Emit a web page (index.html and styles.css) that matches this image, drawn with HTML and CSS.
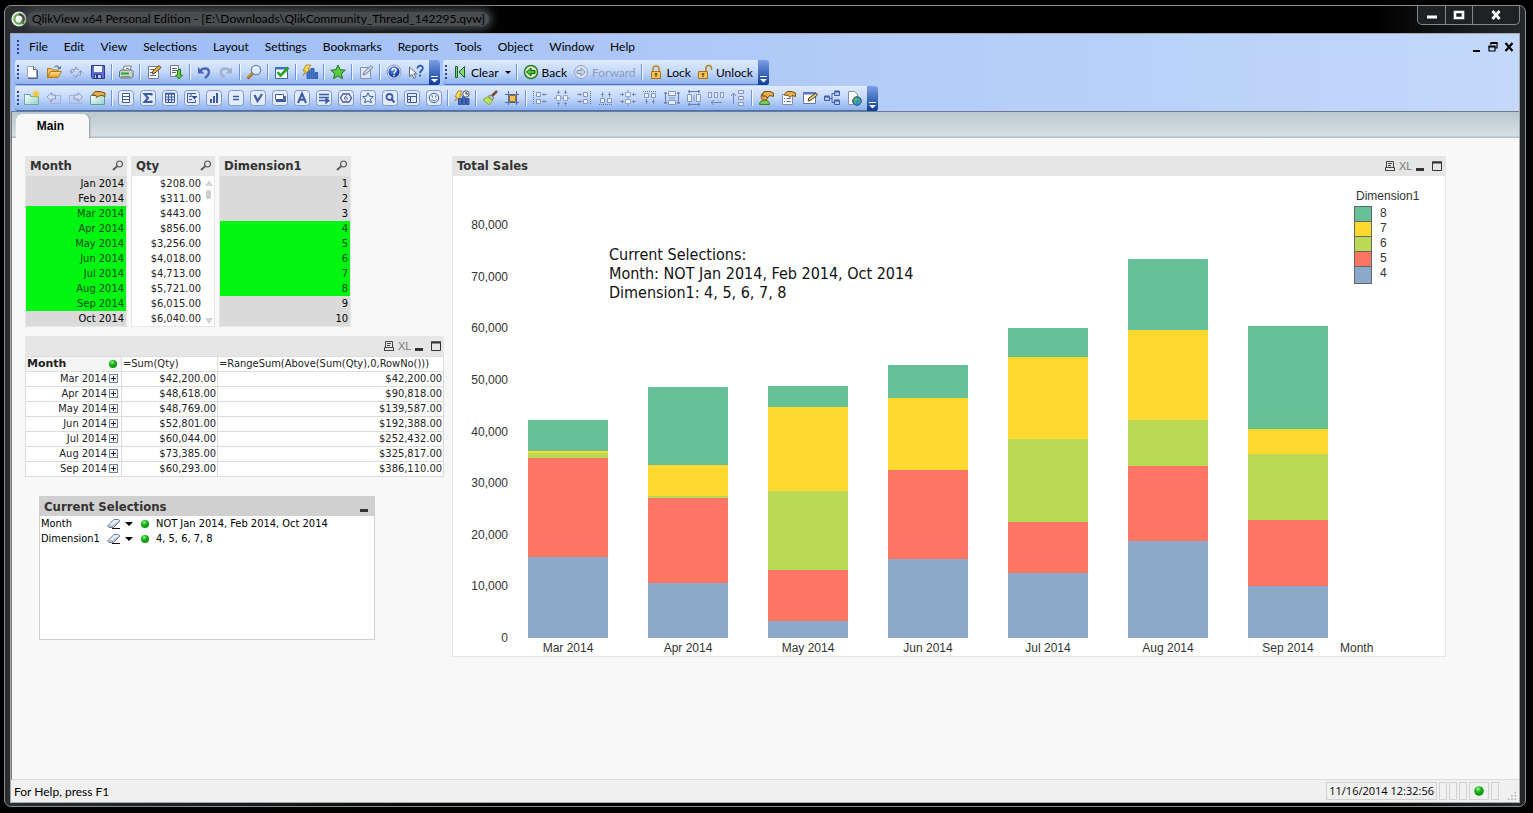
FILE: index.html
```html
<!DOCTYPE html>
<html lang="en">
<head>
<meta charset="utf-8">
<title>QlikView x64 Personal Edition</title>
<link rel="stylesheet" href="styles.css">
</head>
<body>
<svg class="sprite" aria-hidden="true">
  <defs>
    <linearGradient id="gFolder" x1="0" y1="0" x2="0" y2="1"><stop offset="0" stop-color="#ffe79a"/><stop offset="1" stop-color="#e8961e"/></linearGradient>
    <linearGradient id="gTeal" x1="0" y1="0" x2="1" y2="1"><stop offset="0" stop-color="#fff"/><stop offset="1" stop-color="#8fd3c8"/></linearGradient>
    <radialGradient id="gBlue" cx=".4" cy=".3"><stop offset="0" stop-color="#6f9cf0"/><stop offset="1" stop-color="#1a44b0"/></radialGradient>
    <radialGradient id="gGreen" cx=".4" cy=".3"><stop offset="0" stop-color="#b6f7a6"/><stop offset=".5" stop-color="#25c41f"/><stop offset="1" stop-color="#0f9a16"/></radialGradient>
  </defs>
  <symbol id="new" viewBox="0 0 16 16"><path d="M3.500 2.500h6l3 3v8h-9z" fill="#fff" stroke="#9aa5bb"/><path d="M9.500 2.500v3h3M4 14.500h9.500V6" fill="none" stroke="#55617d"/></symbol>
  <symbol id="open" viewBox="0 0 16 16"><path d="M1.500 13.500v-9h4l1 1.500h6v2" fill="#f6c65c" stroke="#b67a1c"/><path d="M1.500 13.500l3-6h11l-3.500 6z" fill="url(#gFolder)" stroke="#b67a1c"/><path d="M8 3.500c2-2.500 5-1.500 5.500 1M11.500 3.500l2.300 1.500 1-2.500" fill="none" stroke="#39588f"/></symbol>
  <symbol id="reload" viewBox="0 0 16 16"><path d="M3.500 9V5.500h4V3L11 6M1.500 6.500l2 3 2.500-3M12.500 7v4h-4v2.500L5 11M10.500 9l2-2.500L15 9" fill="#c8d2ea" stroke="#8d9cc0"/></symbol>
  <symbol id="save" viewBox="0 0 16 16"><path d="M1.500 1.500h13v13h-12l-1-1z" fill="#5d6fd0" stroke="#2b3a91"/><path d="M4 2h8v6H4z" fill="#f2f4fb"/><path d="M4.500 10.500h7v4h-7z" fill="#c5ccdf" stroke="#2b3a91"/><path d="M6 11h2v3H6z" fill="#2b3a91"/></symbol>
  <symbol id="print" viewBox="0 0 16 16"><path d="M4.500 7l2-5h7l-2 5z" fill="#fff" stroke="#6e7f8f"/><path d="M1.500 7.500l2-1.500h10l1.500 1.500v5l-2 1.500h-10l-1.500-1z" fill="#c9d5cd" stroke="#5a6d66"/><path d="M3 9.500h8" stroke="#2da52f" stroke-width="2"/><path d="M3 12.500h9M8 4.500h3" stroke="#7d8f88"/></symbol>
  <symbol id="edit" viewBox="0 0 16 16"><path d="M2.500 2.500h10v12h-10z" fill="#fff" stroke="#707b92"/><path d="M4 5.500h4M4 8.500h3M4 11.500h6" stroke="#5a6580"/><path d="M6 10l1-3 6-5.500 2 2-6 5.500z" fill="#f0b437" stroke="#5a3f12"/></symbol>
  <symbol id="script" viewBox="0 0 16 16"><path d="M2.500 1.500h8v11h-8z" fill="#fff" stroke="#707b92"/><path d="M4 4.500h5M4 6.500h5M4 8.500h4" stroke="#5a6580"/><path d="M9.500 6v5h-2l3.500 4 3.500-4h-2V5z" fill="#5dcb45" stroke="#28781d"/></symbol>
  <symbol id="undo" viewBox="0 0 16 16"><path d="M4 7c3-4 9-3 9 1 0 3-2 4-4 6" fill="none" stroke="#4a66b5" stroke-width="2.500"/><path d="M2 3v6.500h6.500z" fill="#4a66b5"/></symbol>
  <symbol id="redo" viewBox="0 0 16 16"><path d="M12 7c-3-4-9-3-9 1 0 3 1 4 4 5" fill="none" stroke="#a3afca" stroke-width="2.500"/><path d="M14 3v6.500H7.500z" fill="#a3afca"/></symbol>
  <symbol id="find" viewBox="0 0 16 16"><path d="M1.500 14.500l5-5" stroke="#a36a16" stroke-width="3"/><path d="M2 13.500l4-4" stroke="#f0b848" stroke-width="1"/><circle cx="10" cy="6" r="4.700" fill="#d8ecfb" stroke="#7386a8" stroke-width="1.300"/><path d="M7.500 5c1-2 2.500-2 4-1.500" stroke="#fff" fill="none"/></symbol>
  <symbol id="check" viewBox="0 0 16 16"><path d="M1.500 3.500h12v11h-12z" fill="#fff" stroke="#3467b3"/><path d="M1 3h13v2.500H1z" fill="#3d74c9"/><path d="M3.500 8l3 3.500 8-8" fill="none" stroke="#2aa321" stroke-width="2.600"/></symbol>
  <symbol id="chart" viewBox="0 0 16 16"><path d="M5 6.500h3v8H5zM9 4.500h3v10H9zM13 8.500h2.500v6H13z" fill="#3f78d6" stroke="#214a9c" stroke-width=".8"/><path d="M4 1h5L6 5h2.500L1 11.500 3.500 7H1z" fill="#ffd94d" stroke="#9d7418" stroke-width=".7"/></symbol>
  <symbol id="star" viewBox="0 0 16 16"><path d="M8 1l2.100 4.700 5.100.5-3.900 3.400 1.200 5L8 12l-4.500 2.600 1.200-5L.8 6.200l5.100-.5z" fill="#58cf43" stroke="#23701c"/></symbol>
  <symbol id="note" viewBox="0 0 16 16"><path d="M2.500 3.500h10v11h-10z" fill="#dfe7f6" stroke="#8592b3"/><path d="M5 11l1-3 7-6.500 2 2-7 6.500z" fill="#c9d3e8" stroke="#76849f"/></symbol>
  <symbol id="help" viewBox="0 0 16 16"><circle cx="8" cy="8" r="7" fill="#fff" stroke="#8394bd"/><circle cx="8" cy="8" r="5.700" fill="url(#gBlue)"/><path d="M6 6.500c0-3 4.200-2.500 4 0C10 8 8 8 8 9.700M8 10.700v1.600" stroke="#fff" stroke-width="1.500" fill="none"/></symbol>
  <symbol id="whats" viewBox="0 0 16 16"><path d="M1.500 3v9.500l2.500-2 2 4 1.800-1-2-3.700h3z" fill="#fff" stroke="#5b6680"/><path d="M9.500 4.500c0-4 5.500-3.500 5.300 0C14.700 6.500 12 6.500 12 9M12 10.500v2" stroke="#2b56b5" stroke-width="1.800" fill="none"/></symbol>
  <symbol id="clear" viewBox="0 0 16 16"><path d="M3.500 2.500h2v11h-2zM12.500 2.500v11L7 8z" fill="#7fdc6b" stroke="#1c5e2a"/></symbol>
  <symbol id="back" viewBox="0 0 16 16"><circle cx="8" cy="8" r="6.500" fill="#d9f5cf" stroke="#2e7d27" stroke-width="1.500"/><path d="M3.500 8L8 4v2.500h4v3H8V12z" fill="#47c53b" stroke="#17520f"/></symbol>
  <symbol id="forward" viewBox="0 0 16 16"><circle cx="8" cy="8" r="6.500" fill="#dbe4f6" stroke="#93a1c0"/><path d="M12.500 8L8 4v2.500H4v3h4V12z" fill="#c7d2e8" stroke="#8493b4"/></symbol>
  <symbol id="lock" viewBox="0 0 16 16"><path d="M5 8V5c0-4 6-4 6 0v3" fill="none" stroke="#b5862c" stroke-width="1.500"/><path d="M3.500 7.500h9v7h-9z" fill="#f8c55a" stroke="#b0701b"/><path d="M8 9v4M6.500 10h3" stroke="#6b430b" stroke-width="1.200"/></symbol>
  <symbol id="unlock" viewBox="0 0 16 16"><path d="M9 8V4.500c0-4 5.500-4 5.500 0V6" fill="none" stroke="#b5862c" stroke-width="1.500"/><path d="M1.500 7.500h9v7h-9z" fill="#f8c55a" stroke="#b0701b"/><path d="M6 9v4M4.500 10h3" stroke="#6b430b" stroke-width="1.200"/></symbol>
  <symbol id="addsheet" viewBox="0 0 16 16"><path d="M.5 4.500h6v2h8v8H.5z" fill="url(#gTeal)" stroke="#6ba7a0"/><path d="M12 0v8M8 4h8M9.300 1.300l5.400 5.400M14.700 1.300L9.300 6.700" stroke="#f3c52e" stroke-width="1.200"/></symbol>
  <symbol id="sheetback" viewBox="0 0 16 16"><path d="M8 5.500h6.500v8H4.500V11" fill="none" stroke="#a5b2d0"/><path d="M1 7l4.500-4.500V5h4v4h-4v2.500z" fill="#d3def4" stroke="#8d9bbd"/></symbol>
  <symbol id="sheetfwd" viewBox="0 0 16 16"><path d="M5 5.500H1.500v8h12V11" fill="none" stroke="#a5b2d0"/><path d="M14.500 7L10 2.500V5H6v4h4v2.500z" fill="#d3def4" stroke="#8d9bbd"/></symbol>
  <symbol id="props" viewBox="0 0 16 16"><path d="M.5 5.500h14v9H.5z" fill="url(#gTeal)" stroke="#5f9d95"/><path d="M2 5l3-3.500h5L15 3v3.500l-3-1-3 .5-2.500 1.500L6 5.500z" fill="#e1b04d" stroke="#77500f"/></symbol>
  <symbol id="box" viewBox="0 0 16 16"><rect x=".5" y=".5" width="15" height="15" rx="3" fill="#e3ecfc" stroke="#8396c4"/></symbol>
  <symbol id="list" viewBox="0 0 16 16"><use href="#box"/><path d="M4.500 3.500h7v9h-7zM5 6.500h6M5 9.500h6" fill="#fff" stroke="#3d5aa5"/></symbol>
  <symbol id="sum" viewBox="0 0 16 16"><use href="#box"/><path d="M11.500 5.500V4h-7L8 8l-3.500 4h7v-1.500" fill="none" stroke="#3d5aa5" stroke-width="2"/></symbol>
  <symbol id="table" viewBox="0 0 16 16"><use href="#box"/><path d="M3.500 4h9v8.500h-9zM3 7h9M3 9.700h9M6.500 4v8.500M9.500 4v8.500" fill="none" stroke="#3d5aa5"/><path d="M3 3.500h10" stroke="#3d5aa5" stroke-width="1.500"/></symbol>
  <symbol id="multi" viewBox="0 0 16 16"><use href="#box"/><path d="M12 3.500H3.500v9h8V10M5 6.500h2M5 9.500h3M7 4v3" fill="none" stroke="#3d5aa5"/><path d="M7.500 6h6l-3 3.500z" fill="#2d488e"/></symbol>
  <symbol id="bars" viewBox="0 0 16 16"><use href="#box"/><path d="M4 9h2v4H4zM7 6h2v7H7zM10 3h2v10h-2z" fill="#3d5aa5"/></symbol>
  <symbol id="input" viewBox="0 0 16 16"><use href="#box"/><path d="M5 6.500h6M5 9.500h6" stroke="#3d5aa5" stroke-width="1.700"/></symbol>
  <symbol id="vee" viewBox="0 0 16 16"><use href="#box"/><path d="M4.500 5l3 6L12 4" fill="none" stroke="#3d5aa5" stroke-width="2.200"/></symbol>
  <symbol id="button" viewBox="0 0 16 16"><use href="#box"/><path d="M3.500 4.500h8v5h-8z" fill="#fff" stroke="#3d5aa5"/><path d="M4 11h9V6" fill="none" stroke="#3d5aa5" stroke-width="1.800"/></symbol>
  <symbol id="text" viewBox="0 0 16 16"><use href="#box"/><path d="M4 13L8 3.500 12 13M5 9.700h6" fill="none" stroke="#3d5aa5" stroke-width="2"/></symbol>
  <symbol id="line" viewBox="0 0 16 16"><use href="#box"/><path d="M3 4.500h10M3 7.500h10M3 10.500h7M10 8.500l3 2-3 2.500z" fill="#3d5aa5" stroke="#3d5aa5" stroke-width="1.300"/></symbol>
  <symbol id="slider" viewBox="0 0 16 16"><use href="#box"/><path d="M5 4h6l2.500 4L11 12H5L2.500 8z" fill="#fff" stroke="#3d5aa5" stroke-width="1.300"/><path d="M9.500 6C7.500 5.300 6.500 7 6.500 8.500c0 2 3 2 3 .3 0-1.500-2.200-1.500-3-.3" fill="none" stroke="#3d5aa5"/></symbol>
  <symbol id="bookmark" viewBox="0 0 16 16"><use href="#box"/><path d="M8 2.800l1.500 3.400 3.800.4-2.800 2.500.8 3.700L8 11l-3.300 1.800.8-3.700-2.800-2.500 3.800-.4z" fill="#e3ecfc" stroke="#3d5aa5"/></symbol>
  <symbol id="searchobj" viewBox="0 0 16 16"><use href="#box"/><circle cx="7.500" cy="7" r="3" fill="none" stroke="#3d5aa5" stroke-width="1.800"/><path d="M9.500 9l3 3.500" stroke="#3d5aa5" stroke-width="2"/></symbol>
  <symbol id="container" viewBox="0 0 16 16"><use href="#box"/><path d="M3.500 3.500h9v9h-9zM6.500 6v6.500M3.500 6.500h9M3.500 9.500h3" fill="none" stroke="#3d5aa5"/></symbol>
  <symbol id="smile" viewBox="0 0 16 16"><use href="#box"/><circle cx="8" cy="8" r="4.700" fill="#eef3fd" stroke="#3d5aa5"/><path d="M6.300 5.500v2M9.700 5.500v2M5.500 9.300c1.500 2 3.500 2 5 0" fill="none" stroke="#3d5aa5"/></symbol>
  <symbol id="wizard" viewBox="0 0 16 16"><path d="M4.500 8.500h3v6h-3zM8.500 6.500h3v8h-3zM12.500 8.500h2.500v6h-2.500z" fill="#3f6cc0" stroke="#223f85" stroke-width=".8"/><path d="M4 1h4L6 5h2L1 11l2-4H1z" fill="#ffd94d" stroke="#9d7418" stroke-width=".7"/><circle cx="12" cy="4" r="3.200" fill="#f4f6fb" stroke="#4c5671"/><path d="M12 2v2h2" fill="none" stroke="#222"/></symbol>
  <symbol id="brush" viewBox="0 0 16 16"><path d="M15 1L10 6" stroke="#7c4b28" stroke-width="2.500"/><path d="M9 5l3 3-1.500 2L6 6.500z" fill="#bfc5cc" stroke="#686e77" stroke-width=".8"/><path d="M6 6.500l4.500 4L7 15l-6-5.500z" fill="#a5d941" stroke="#7ca632" stroke-width=".8"/><path d="M3 9l4 4M5 8l4 4" stroke="#e0f4a4"/></symbol>
  <symbol id="grid" viewBox="0 0 16 16"><path d="M4.500 1v14M12.500 1v14M1 4.500h14M1 12.500h14" stroke="#4c69ac"/><path d="M5.500 5.500h6v6h-6z" fill="#f3c352" stroke="#9b6b1c"/></symbol>
  <symbol id="alignl" viewBox="0 0 16 16"><path d="M1.500 1v14" stroke="#5874b5" stroke-dasharray="1 1"/><path d="M4.500 2.500h4v4h-4zM4.500 9.500h4v4h-4z" fill="#e8effb" stroke="#8795b6"/><path d="M10 4.500h5M10 11.500h5M12 3v3M12 10v3" stroke="#6b7dab" stroke-width=".8"/></symbol>
  <symbol id="alignc" viewBox="0 0 16 16"><path d="M5.500 2.500h5v4h-5zM5.500 9.500h5v4h-5z" fill="#e8effb" stroke="#9aa7c4"/><path d="M8 0v2M8 7v2M8 14v2" stroke="#8795b6"/><path d="M0 4.500h4M12 4.500h4M0 11.500h4M12 11.500h4M2.500 3v3M13.500 3v3M2.500 10v3M13.500 10v3" stroke="#6b7dab" stroke-width=".8"/></symbol>
  <symbol id="alignb" viewBox="0 0 16 16"><path d="M2.500 8.500h4v4h-4zM9.500 8.500h4v4h-4z" fill="#e8effb" stroke="#8795b6"/><path d="M1 14.500h14" stroke="#5874b5" stroke-dasharray="1 1"/><path d="M4.500 2v5M11.500 2v5M3 4.500h3M10 4.500h3" stroke="#6b7dab" stroke-width=".8"/></symbol>
  <symbol id="spread" viewBox="0 0 16 16"><path d="M1.500 2v12M14.500 2v12" stroke="#6b7dab"/><path d="M4.500 1.500h7v4h-7zM4.500 10.500h7v4h-7zM5 8h6" fill="#e8effb" stroke="#8795b6"/><path d="M0 4l1.500-2L3 4M13 4l1.500-2L16 4M0 12l1.500 2L3 12M13 12l1.500 2L16 12" fill="none" stroke="#6b7dab"/></symbol>
  <symbol id="pack" viewBox="0 0 16 16"><path d="M.5 2.500h3v5h-3zM6.500 2.500h3v5h-3zM12.500 2.500h3v5h-3z" fill="#e8effb" stroke="#8795b6"/><path d="M3 12.500h11M6 10l-3 2.500L6 15" fill="none" stroke="#7788b2"/></symbol>
  <symbol id="user" viewBox="0 0 16 16"><path d="M1.500 14.500c0-6 10-6 10 0z" fill="#7dca4d" stroke="#3d7c22"/><circle cx="6.500" cy="6.500" r="3.500" fill="#f0a850" stroke="#985a18"/><path d="M4 6l2-4.500h6L15.500 3v3.500L12 5.500 9 8 8 6z" fill="#e1b04d" stroke="#77500f"/></symbol>
  <symbol id="docprops" viewBox="0 0 16 16"><path d="M2.500 4.500h10v10h-10z" fill="#f7f9fe" stroke="#8290ad"/><path d="M4 8.500h1M4 11.500h1M6.500 8.500h4M6.500 11.500h4" stroke="#57658a"/><path d="M4 5l3-3.500h5l3.500 1.500v3.500L12 5.500l-2 2-1.500-2z" fill="#e1b04d" stroke="#77500f"/></symbol>
  <symbol id="viewer" viewBox="0 0 16 16"><path d="M1.500 2.500h12v11h-12z" fill="#fff" stroke="#5c77b7"/><path d="M1 3.500h13" stroke="#5c77b7" stroke-width="2"/><path d="M6 11l1-3 7-5 1.500 2-6.500 5z" fill="#f0c868" stroke="#4e4127"/></symbol>
  <symbol id="tables" viewBox="0 0 16 16"><path d="M6 8.500h2v-5h2M8 8v4.500h2" fill="none" stroke="#4162ae"/><path d="M.5 6.500h5v4h-5zM10.500 1.500h5v4h-5zM10.500 10.500h5v4h-5z" fill="#b6c9f2" stroke="#3d5aa5"/><path d="M.5 6.500h5M10.500 1.500h5M10.500 10.500h5" stroke="#3d5aa5" stroke-width="2"/></symbol>
  <symbol id="web" viewBox="0 0 16 16"><path d="M2.500 1.500h6l3 3v10h-9z" fill="#fff" stroke="#8591ad"/><circle cx="11" cy="11" r="4.300" fill="#3b87cf" stroke="#245184"/><path d="M8 9c3-2 4 0 2.500 1.500S10 14 8.500 12.500M13 8.500c-1 2 2 3 1 5" fill="#58c04a" stroke="#58c04a"/></symbol>
  <symbol id="mag" viewBox="0 0 12 12"><circle cx="7.500" cy="4" r="3" fill="none" stroke="#555" stroke-width="1.200"/><path d="M5.300 6.200L1 10" stroke="#555" stroke-width="1.800"/></symbol>
  <symbol id="printcap" viewBox="0 0 12 12"><path d="M2.500 8V1.500h7V8M4 3.500h4M4 5.500h3M1 10.500h10M1.500 10V7.500h9V10" fill="none" stroke="#444"/></symbol>
  <symbol id="maxcap" viewBox="0 0 12 12"><path d="M1.500 2v8.500h9V2z" fill="none" stroke="#333"/><path d="M1 2.500h10" stroke="#333" stroke-width="2"/></symbol>
  <symbol id="eraser" viewBox="0 0 16 12"><path d="M1.500 8L8 1.500h4.500L14 3 7.500 9.500H3z" fill="#e6edf8" stroke="#6c7b97"/><path d="M1.500 8h5L14 3M6.500 8l1 1.500" fill="none" stroke="#8a9ab8"/><path d="M6 10.500h8" stroke="#111"/></symbol>
  <symbol id="dot" viewBox="0 0 10 10"><circle cx="5" cy="5" r="4" fill="url(#gGreen)"/></symbol>
</svg>

<div class="window">
  <header class="titlebar">
    <svg class="logo" viewBox="0 0 16 16"><circle cx="8" cy="8" r="7.600" fill="#e9ece9"/><circle cx="8" cy="8" r="4.600" fill="#fff" stroke="#6aa84a" stroke-width="2.200"/><path d="M8 3.400A4.600 4.600 0 0 1 12 10.500" fill="none" stroke="#3c4b3a" stroke-width="2.200"/><path d="M10 10l3 3" stroke="#4d9e35" stroke-width="2.200"/></svg>
    <h1 class="title">QlikView x64 Personal Edition - [E:\Downloads\QlikCommunity_Thread_142295.qvw]</h1>
    <div class="winbtns">
      <button aria-label="Minimize"><svg viewBox="0 0 14 12"><path d="M2 6.500h10v3H2z" fill="#fff"/></svg></button>
      <button aria-label="Maximize"><svg viewBox="0 0 14 12"><path d="M3 3h8v6H3z" fill="none" stroke="#fff" stroke-width="2.600"/></svg></button>
      <button class="wide" aria-label="Close"><svg viewBox="0 0 14 12"><path d="M3.500 2l7 8M10.500 2l-7 8" stroke="#fff" stroke-width="2.800"/></svg></button>
    </div>
  </header>

  <div class="client">
    <div class="bars">
      <nav class="menu">
        <span class="grip"></span>
        <button>File</button><button>Edit</button><button>View</button><button>Selections</button><button>Layout</button><button>Settings</button><button>Bookmarks</button><button>Reports</button><button>Tools</button><button>Object</button><button>Window</button><button>Help</button>
        <span class="mdi">
          <button aria-label="Minimize document"><svg viewBox="0 0 12 12"><path d="M2 9h7v2H2z"/></svg></button>
          <button aria-label="Restore document"><svg viewBox="0 0 12 12"><path d="M4 4V2h6v5H8M2 5.500h6V10H2z" fill="none" stroke="#000" stroke-width="1.200"/><path d="M3.500 2h7M1.500 5.500h7" stroke="#000" stroke-width="2"/></svg></button>
          <button aria-label="Close document"><svg viewBox="0 0 12 12"><path d="M2.500 2l7 8M9.500 2l-7 8" stroke="#000" stroke-width="2.200"/></svg></button>
        </span>
      </nav>
      <div class="row">
        <div class="toolbar" role="toolbar" aria-label="Standard">
          <span class="grip"></span>
          <button aria-label="New"><svg><use href="#new"/></svg></button><button aria-label="Open"><svg><use href="#open"/></svg></button><button aria-label="Refresh"><svg><use href="#reload"/></svg></button><button aria-label="Save"><svg><use href="#save"/></svg></button><i class="sep"></i>
          <button aria-label="Print"><svg><use href="#print"/></svg></button><i class="sep"></i>
          <button aria-label="Edit Script"><svg><use href="#edit"/></svg></button><button aria-label="Reload"><svg><use href="#script"/></svg></button><i class="sep"></i>
          <button aria-label="Undo"><svg><use href="#undo"/></svg></button><button aria-label="Redo"><svg><use href="#redo"/></svg></button><i class="sep"></i>
          <button aria-label="Search"><svg><use href="#find"/></svg></button><i class="sep"></i>
          <button aria-label="Current Selections"><svg><use href="#check"/></svg></button><i class="sep"></i>
          <button aria-label="Quick Chart"><svg><use href="#chart"/></svg></button><i class="sep"></i>
          <button aria-label="Add Bookmark"><svg><use href="#star"/></svg></button><i class="sep"></i>
          <button aria-label="Notes"><svg><use href="#note"/></svg></button><i class="sep"></i>
          <button aria-label="Help Topics"><svg><use href="#help"/></svg></button><button aria-label="Context Help"><svg><use href="#whats"/></svg></button>
          <button class="more" aria-label="More buttons"><svg viewBox="0 0 7 7"><path d="M0 0h7v1H0z" fill="#fff"/><path d="M0 3h7L3.500 6.500z" fill="#fff"/></svg></button>
        </div>
        <div class="toolbar" role="toolbar" aria-label="Navigation">
          <span class="grip"></span>
          <button class="lbl"><svg><use href="#clear"/></svg>Clear</button><button class="drop" aria-label="Clear options"></button><i class="sep"></i>
          <button class="lbl"><svg><use href="#back"/></svg>Back</button><button class="lbl off" disabled><svg><use href="#forward"/></svg>Forward</button><i class="sep"></i>
          <button class="lbl"><svg><use href="#lock"/></svg>Lock</button><button class="lbl"><svg><use href="#unlock"/></svg>Unlock</button>
          <button class="more" aria-label="More buttons"><svg viewBox="0 0 7 7"><path d="M0 0h7v1H0z" fill="#fff"/><path d="M0 3h7L3.500 6.500z" fill="#fff"/></svg></button>
        </div>
      </div>
      <div class="row">
        <div class="toolbar" role="toolbar" aria-label="Design">
          <span class="grip"></span>
          <button aria-label="Add Sheet"><svg><use href="#addsheet"/></svg></button><button aria-label="Promote Sheet"><svg><use href="#sheetback"/></svg></button><button aria-label="Demote Sheet"><svg><use href="#sheetfwd"/></svg></button><button aria-label="Sheet Properties"><svg><use href="#props"/></svg></button><i class="sep"></i>
          <button aria-label="List Box"><svg><use href="#list"/></svg></button><button aria-label="Statistics Box"><svg><use href="#sum"/></svg></button><button aria-label="Table Box"><svg><use href="#table"/></svg></button><button aria-label="Multi Box"><svg><use href="#multi"/></svg></button><button aria-label="Chart"><svg><use href="#bars"/></svg></button><button aria-label="Input Box"><svg><use href="#input"/></svg></button><button aria-label="Selections Box"><svg><use href="#vee"/></svg></button><button aria-label="Button"><svg><use href="#button"/></svg></button><button aria-label="Text Object"><svg><use href="#text"/></svg></button><button aria-label="Line Object"><svg><use href="#line"/></svg></button><button aria-label="Slider"><svg><use href="#slider"/></svg></button><button aria-label="Bookmark Object"><svg><use href="#bookmark"/></svg></button><button aria-label="Search Object"><svg><use href="#searchobj"/></svg></button><button aria-label="Container"><svg><use href="#container"/></svg></button><button aria-label="Custom Object"><svg><use href="#smile"/></svg></button><i class="sep"></i>
          <button aria-label="Time Chart Wizard"><svg><use href="#wizard"/></svg></button><i class="sep"></i>
          <button aria-label="Format Painter"><svg><use href="#brush"/></svg></button><button aria-label="Design Grid"><svg><use href="#grid"/></svg></button><i class="sep"></i>
          <button aria-label="Left Align"><svg><use href="#alignl"/></svg></button><button aria-label="Center Horizontally"><svg class="turn"><use href="#alignc"/></svg></button><button aria-label="Right Align"><svg class="flip"><use href="#alignl"/></svg></button><button aria-label="Bottom Align"><svg><use href="#alignb"/></svg></button><button aria-label="Center Vertically"><svg><use href="#alignc"/></svg></button><button aria-label="Top Align"><svg class="over"><use href="#alignb"/></svg></button><button aria-label="Space Vertically"><svg><use href="#spread"/></svg></button><button aria-label="Space Horizontally"><svg class="turn"><use href="#spread"/></svg></button><button aria-label="Adjust Left"><svg><use href="#pack"/></svg></button><button aria-label="Adjust Top"><svg class="turn"><use href="#pack"/></svg></button><i class="sep"></i>
          <button aria-label="User Preferences"><svg><use href="#user"/></svg></button><button aria-label="Document Properties"><svg><use href="#docprops"/></svg></button><button aria-label="Variable Overview"><svg><use href="#viewer"/></svg></button><button aria-label="Table Viewer"><svg><use href="#tables"/></svg></button><button aria-label="WebView"><svg><use href="#web"/></svg></button>
          <button class="more" aria-label="More buttons"><svg viewBox="0 0 7 7"><path d="M0 0h7v1H0z" fill="#fff"/><path d="M0 3h7L3.500 6.500z" fill="#fff"/></svg></button>
        </div>
      </div>
    </div>

    <div class="tabs" role="tablist"><button class="tab" role="tab" aria-selected="true">Main</button></div>

    <main class="sheet">
      <div class="left">
        <div class="lists">
          <section class="listbox month">
            <h2 class="cap">Month<svg class="mag"><use href="#mag"/></svg></h2>
            <ul><li class="ex">Jan 2014</li><li class="ex">Feb 2014</li><li class="sel">Mar 2014</li><li class="sel">Apr 2014</li><li class="sel">May 2014</li><li class="sel">Jun 2014</li><li class="sel">Jul 2014</li><li class="sel">Aug 2014</li><li class="sel">Sep 2014</li><li class="ex">Oct 2014</li></ul>
          </section>
          <section class="listbox qty">
            <h2 class="cap">Qty<svg class="mag"><use href="#mag"/></svg></h2>
            <div class="scroll">
              <ul><li>$208.00</li><li>$311.00</li><li>$443.00</li><li>$856.00</li><li>$3,256.00</li><li>$4,018.00</li><li>$4,713.00</li><li>$5,721.00</li><li>$6,015.00</li><li>$6,040.00</li></ul>
              <div class="track"><i class="up"></i><i class="thumb"></i><i class="down"></i></div>
            </div>
          </section>
          <section class="listbox dim">
            <h2 class="cap">Dimension1<svg class="mag"><use href="#mag"/></svg></h2>
            <ul><li class="ex">1</li><li class="ex">2</li><li class="ex">3</li><li class="sel">4</li><li class="sel">5</li><li class="sel">6</li><li class="sel">7</li><li class="sel">8</li><li class="ex">9</li><li class="ex">10</li></ul>
          </section>
        </div>

        <section class="pivot">
          <div class="cap"><span class="tools"><svg><use href="#printcap"/></svg><span class="xl">XL</span><i class="min"></i><svg><use href="#maxcap"/></svg></span></div>
          <table>
            <thead><tr><th class="c1"><span class="hd">Month<svg class="dot"><use href="#dot"/></svg></span></th><th class="c2">=Sum(Qty)</th><th>=RangeSum(Above(Sum(Qty),0,RowNo()))</th></tr></thead>
            <tbody>
              <tr><td>Mar 2014<button class="plus" aria-label="Expand"></button></td><td>$42,200.00</td><td>$42,200.00</td></tr>
              <tr><td>Apr 2014<button class="plus" aria-label="Expand"></button></td><td>$48,618.00</td><td>$90,818.00</td></tr>
              <tr><td>May 2014<button class="plus" aria-label="Expand"></button></td><td>$48,769.00</td><td>$139,587.00</td></tr>
              <tr><td>Jun 2014<button class="plus" aria-label="Expand"></button></td><td>$52,801.00</td><td>$192,388.00</td></tr>
              <tr><td>Jul 2014<button class="plus" aria-label="Expand"></button></td><td>$60,044.00</td><td>$252,432.00</td></tr>
              <tr><td>Aug 2014<button class="plus" aria-label="Expand"></button></td><td>$73,385.00</td><td>$325,817.00</td></tr>
              <tr><td>Sep 2014<button class="plus" aria-label="Expand"></button></td><td>$60,293.00</td><td>$386,110.00</td></tr>
            </tbody>
          </table>
        </section>

        <section class="current">
          <h2 class="cap">Current Selections<i class="min"></i></h2>
          <div class="selrow"><span class="field">Month</span><svg class="eraser"><use href="#eraser"/></svg><i class="arrow"></i><svg class="dot"><use href="#dot"/></svg><span>NOT Jan 2014, Feb 2014, Oct 2014</span></div>
          <div class="selrow"><span class="field">Dimension1</span><svg class="eraser"><use href="#eraser"/></svg><i class="arrow"></i><svg class="dot"><use href="#dot"/></svg><span>4, 5, 6, 7, 8</span></div>
        </section>
      </div>

      <section class="chart">
        <h2 class="cap">Total Sales<span class="tools"><svg><use href="#printcap"/></svg><span class="xl">XL</span><i class="min"></i><svg><use href="#maxcap"/></svg></span></h2>
        <div class="chartbody">
          <div class="axis"><span>80,000</span><span>70,000</span><span>60,000</span><span>50,000</span><span>40,000</span><span>30,000</span><span>20,000</span><span>10,000</span><span>0</span></div>
          <div class="plot">
            <div class="stack"><i class="s8" style="--v:6005"></i><i class="s7" style="--v:387"></i><i class="s6" style="--v:969"></i><i class="s5" style="--v:19177"></i><i class="s4" style="--v:15690"></i></div>
            <div class="stack"><i class="s8" style="--v:15109"></i><i class="s7" style="--v:6102"></i><i class="s6" style="--v:387"></i><i class="s5" style="--v:16465"></i><i class="s4" style="--v:10654"></i></div>
            <div class="stack"><i class="s8" style="--v:4068"></i><i class="s7" style="--v:16271"></i><i class="s6" style="--v:15303"></i><i class="s5" style="--v:9879"></i><i class="s4" style="--v:3293"></i></div>
            <div class="stack"><i class="s8" style="--v:6392"></i><i class="s7" style="--v:13947"></i><i class="s5" style="--v:17240"></i><i class="s4" style="--v:15303"></i></div>
            <div class="stack"><i class="s8" style="--v:5617"></i><i class="s7" style="--v:15884"></i><i class="s6" style="--v:16077"></i><i class="s5" style="--v:9879"></i><i class="s4" style="--v:12591"></i></div>
            <div class="stack"><i class="s8" style="--v:13753"></i><i class="s7" style="--v:17433"></i><i class="s6" style="--v:8910"></i><i class="s5" style="--v:14528"></i><i class="s4" style="--v:18789"></i></div>
            <div class="stack"><i class="s8" style="--v:19952"></i><i class="s7" style="--v:4843"></i><i class="s6" style="--v:12785"></i><i class="s5" style="--v:12785"></i><i class="s4" style="--v:10073"></i></div>
          </div>
          <div class="legend"><h3>Dimension1</h3><ul><li class="s8">8</li><li class="s7">7</li><li class="s6">6</li><li class="s5">5</li><li class="s4">4</li></ul></div>
          <div class="months"><span>Mar 2014</span><span>Apr 2014</span><span>May 2014</span><span>Jun 2014</span><span>Jul 2014</span><span>Aug 2014</span><span>Sep 2014</span></div>
          <div class="xname">Month</div>
          <p class="overlay">Current Selections:<br>Month: NOT Jan 2014, Feb 2014, Oct 2014<br>Dimension1: 4, 5, 6, 7, 8</p>
        </div>
      </section>
    </main>

    <footer class="status">
      <span class="hint">For Help, press F1</span>
      <time class="pane clock">11/16/2014 12:32:56</time><i class="pane s"></i><i class="pane s"></i><i class="pane s"></i><span class="pane led"><svg class="dot"><use href="#dot"/></svg></span><i class="pane s"></i>
      <svg class="size" viewBox="0 0 12 12"><path d="M9 2h2v2H9zM9 6h2v2H9zM9 10h2v2H9zM5 6h2v2H5zM5 10h2v2H5zM1 10h2v2H1z" fill="#b8b8b8"/></svg>
    </footer>
  </div>
</div>
</body>
</html>
```
FILE: styles.css
```css
* { box-sizing: border-box; }
html, body { height: 100%; }
body { margin: 0; background: #000; font: 12px/15px Lato, "Open Sans", sans-serif; color: #000; padding: 5px 7px 6px 4px; }
button { border: 0; background: none; padding: 0; margin: 0; font: inherit; color: inherit; }
h1, h2, h3, p, ul { margin: 0; padding: 0; font-weight: normal; }
ul { list-style: none; }
i { font-style: normal; }
.sprite { position: absolute; width: 0; height: 0; }

.window { height: 100%; display: flex; flex-direction: column; border: 1px solid #8a8d8f; border-radius: 7px; padding: 0 5px 3px 5px; background: linear-gradient(90deg, #2b2e30 0, #000 520px, #000 90%, #26292b 100%); }
.titlebar { display: flex; align-items: flex-start; height: 27px; flex: none; }
.logo { width: 16px; height: 16px; margin: 5px 0 0 1px; flex: none; }
.title { font-size: 12px; line-height: 14px; margin: 6px 0 0 1px; padding: 0 4px; border-radius: 8px; background: #4b4e50; box-shadow: 0 0 8px 3px #4b4e50; white-space: nowrap; color: #000; }
.winbtns { margin-left: auto; display: flex; border: 1px solid #85888a; border-top: 0; border-radius: 0 0 5px 5px; background: #1f2224; }
.winbtns button { width: 27px; height: 18px; display: flex; align-items: center; justify-content: center; }
.winbtns button + button { border-left: 1px solid #85888a; }
.winbtns .wide { width: 47px; }
.winbtns svg { width: 14px; height: 12px; }

.client { flex: 1; min-height: 0; display: flex; flex-direction: column; border: 1px solid #a6a9ab; background: #f8f8f8; }
.bars { background: linear-gradient(90deg, #9dbcf6, #c3d8fa); padding-left: 4px; flex: none; border-bottom: 1px solid #6c7c90; }
.menu { display: flex; align-items: center; height: 26px; }
.menu > button { margin-left: 16px; line-height: 16px; }
.menu .grip + button { margin-left: 8px; }
.grip { width: 2px; height: 14px; flex: none; margin: 0 2px; background: repeating-linear-gradient(#2c4685 0 2px, transparent 2px 4px); }
.mdi { margin-left: auto; display: flex; gap: 4px; padding-right: 4px; }
.mdi button { width: 12px; height: 12px; }
.mdi svg { width: 12px; height: 12px; display: block; }
.row { display: flex; gap: 3px; height: 26px; }
.row:last-child { height: 25px; }
.toolbar { display: flex; align-items: center; height: 25px; border-radius: 3px; border-bottom: 1px solid #4c6fbd; background: linear-gradient(#dfeafd, #c3d8fb 50%, #8fb2ee); }
.toolbar button { width: 22px; height: 22px; display: flex; align-items: center; justify-content: center; flex: none; }
.toolbar svg { width: 16px; height: 16px; display: block; flex: none; }
.toolbar .lbl { width: auto; gap: 3px; padding: 0 3px; }
.toolbar .off { color: #8c9bbd; }
.sep { width: 2px; height: 16px; margin: 0 2px; border-left: 1px solid #7394d2; border-right: 1px solid #f1f6ff; }
.toolbar .drop { width: 12px; }
.drop::before { content: ""; border: 3px solid transparent; border-top-color: #000; border-bottom: 0; }
.toolbar .more { width: 11px; height: 25px; margin-left: 2px; align-items: flex-end; padding-bottom: 2px; border-radius: 0 3px 3px 0; background: linear-gradient(#7a9fe4, #0c3d96); }
.toolbar .more svg { width: 7px; height: 7px; }
.flip { transform: scaleX(-1); }
.over { transform: scaleY(-1); }
.turn { transform: rotate(90deg); }

.tabs { height: 26px; flex: none; padding-left: 4px; display: flex; align-items: flex-end; background: linear-gradient(#b9c8cf, #d7dfe4 90%, #aab5bb); border-left: 1px solid #777; }
.tab { width: 73px; height: 24px; border-radius: 6px 6px 0 0; background: #f8f8f8; font: bold 12px/24px "Liberation Sans", sans-serif; padding-right: 4px; box-shadow: 1px 0 2px #8d989e; clip-path: inset(0 -4px 0 0); }

.sheet { flex: 1; min-height: 0; display: flex; gap: 8px; align-items: flex-start; padding: 18px 73px 0 13px; background: #f8f8f8; border-left: 1px solid #777; font: 11px/15px "DejaVu Sans Condensed", "Noto Sans", sans-serif; color: #222; border-bottom: 1px solid #ddd; }
.left { width: 419px; flex: none; }
.cap { display: flex; align-items: center; height: 20px; padding: 0 2px 0 4px; background: #e6e6e6; font: bold 13px/20px "DejaVu Sans Condensed", "Noto Sans", sans-serif; color: #333; }
.mag { width: 12px; height: 12px; margin-left: auto; }
.lists { display: flex; gap: 4px; }
.listbox { border: solid #e6e6e6; border-width: 0 1px 1px; }
.month { width: 102px; }
.qty { width: 84px; }
.dim { width: 132px; }
.listbox li { height: 15px; text-align: right; padding-right: 2px; }
.ex { background: #dadada; color: #000; }
.sel { background: #00f510; color: #134b10; }
.scroll { display: flex; background: #fff; }
.scroll ul { flex: 1; }
.track { width: 11px; display: flex; flex-direction: column; align-items: center; padding: 4px 0 2px; }
.up, .down { border: 4px solid transparent; border-top: 0; border-bottom: 6px solid #d4d4d4; }
.down { border-top: 6px solid #d4d4d4; border-bottom: 0; margin-top: auto; }
.thumb { width: 5px; height: 9px; margin-top: 4px; border-radius: 2px; background: #cfcfcf; }

.pivot { margin-top: 9px; background: #fff; }
.tools { margin-left: auto; display: flex; align-items: center; gap: 4px; }
.tools svg { width: 12px; height: 12px; }
.xl { width: 11px; font: 11px/14px "Liberation Sans Narrow", "Liberation Sans", sans-serif; color: #777; margin-left: -1px; }
.min { width: 8px; height: 3px; margin-top: 7px; background: #333; }
.tools .min { margin-left: 2px; margin-right: 3px; }
.pivot table { width: 100%; table-layout: fixed; border-collapse: collapse; }
.pivot th, .pivot td { height: 15px; padding: 0 1px; border: 1px solid #dcdcdc; line-height: 14px; text-align: right; white-space: nowrap; }
.pivot th { text-align: left; font-weight: normal; padding-left: 1px; }
.pivot .c1 { width: 96px; font: bold 11px/14px "DejaVu Sans", sans-serif; background: #f5f5f5; }
.pivot .c2 { width: 96px; }
.pivot td:first-child { padding-right: 3px; }
.hd { display: flex; align-items: center; justify-content: space-between; padding-right: 2px; }
.dot { width: 10px; height: 10px; flex: none; }
.plus { width: 9px; height: 9px; margin-left: 2px; border: 1px solid #71809c; background: linear-gradient(#222, #222) 50% 50% / 5px 1px no-repeat, linear-gradient(#222, #222) 50% 50% / 1px 5px no-repeat, #eef2f8; }

.current { width: 336px; height: 144px; margin: 19px 0 0 14px; border: 1px solid #cfcfcf; background: #fff; color: #000; }
.current .cap { height: 19px; background: #d0d0d0; padding: 0 6px 0 4px; justify-content: space-between; }
.selrow { display: flex; align-items: center; height: 15px; padding-left: 1px; }
.field { width: 65px; }
.eraser { width: 16px; height: 12px; }
.arrow { margin: 0 7px 0 3px; border: 4px solid transparent; border-top-color: #000; border-bottom: 0; }
.selrow .dot { margin-right: 6px; }

.chart { flex: 1; min-width: 0; border: solid #e6e6e6; border-width: 0 1px 1px; background: #fff; }
.chartbody { position: relative; display: grid; grid-template: 462px 18px / 55px 1fr 97px; font: 12px/15px "Liberation Sans", sans-serif; color: #333; }
.axis { display: flex; flex-direction: column; justify-content: space-between; text-align: right; height: 428px; align-self: end; margin-bottom: -8px; }
.plot { display: grid; grid-template-columns: repeat(7, 1fr); height: 413px; align-self: end; }
.stack { display: flex; flex-direction: column; justify-content: flex-end; padding: 0 calc(100% / 6); }
.stack i { height: calc(var(--v) / 80000 * 413px); flex: none; background: var(--c); }
.s8 { --c: #66c296; }
.s7 { --c: #ffd92f; }
.s6 { --c: #bad955; }
.s5 { --c: #ff7563; }
.s4 { --c: #8da9ca; }
.legend { padding: 13px 0 0 6px; }
.legend h3 { font: 12px/15px "Liberation Sans", sans-serif; padding: 0 0 2px 2px; }
.legend li { display: flex; gap: 8px; height: 15px; }
.legend li::before { content: ""; width: 16px; height: 16px; flex: none; background: var(--c); border: 1px solid #666; }
.months { grid-column: 2; display: grid; grid-template-columns: repeat(7, 1fr); text-align: center; padding-top: 3px; }
.xname { margin-left: -8px; padding-top: 3px; }
.overlay { position: absolute; left: 156px; top: 69px; font: 16px/19px "DejaVu Sans Condensed", "Noto Sans", sans-serif; color: #111; white-space: nowrap; }

.status { height: 22px; flex: none; display: flex; align-items: center; background: #f0f0f0; padding: 0 2px 0 3px; }
.hint { flex: 1; }
.pane { height: 18px; border: 1px solid #d2d2d2; margin-right: 2px; padding: 0 1px; }
.clock { font: 11px/16px "Open Sans", sans-serif; padding: 0 2px; }
.s { width: 8px; }
.led { width: 20px; display: flex; align-items: center; justify-content: center; }
.led .dot { width: 12px; height: 12px; }
.size { width: 10px; height: 10px; margin: 8px 0 0 6px; }
```
